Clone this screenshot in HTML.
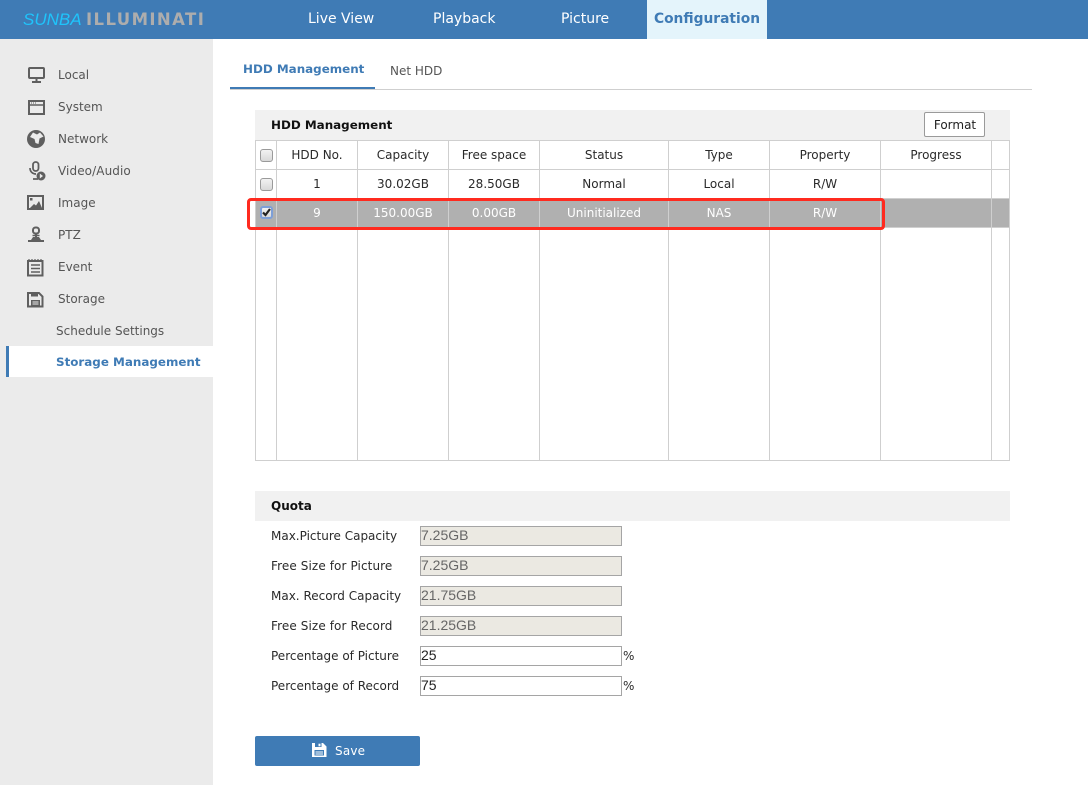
<!DOCTYPE html>
<html><head><meta charset="utf-8"><style>
html,body{margin:0;padding:0;background:#fff}
#p{position:relative;width:1088px;height:785px;overflow:hidden;background:#fff;font:12px "DejaVu Sans",sans-serif;color:#222}
#p div{position:absolute}
.t{white-space:nowrap;line-height:16px;height:16px;color:#2a2a2a}
.c{text-align:center}
.n{color:#fff;font-size:14px;line-height:20px;height:20px;top:9px;white-space:nowrap}
.s{left:58px;color:#555}
.v{background:#cfcfcf;width:1px;top:140px;height:321px}
.h{background:#cfcfcf;left:255px;width:755px;height:1px}
.w{color:#fff}
.i{left:420px;width:202px;height:20px;box-sizing:border-box;border:1px solid #a5a5a5;font:14px/17px "Liberation Sans",sans-serif;padding-left:0}
.r{background:#ebe9e2;color:#666}
.cb{left:260px;width:13px;height:13px;box-sizing:border-box;border:1px solid #9a9a9a;border-radius:3px;background:linear-gradient(#f2f2f2,#d8d8d8)}
svg{position:absolute;overflow:visible}
</style></head><body><div id="p">
<div style="left:0;top:0;width:1088px;height:39px;background:#3f7bb5"></div>
<div style="left:23px;top:10px;height:20px;font:italic 17px/20px 'Liberation Sans',sans-serif;color:#1fc4fb">SUNBA</div>
<div style="left:86px;top:10px;height:20px;font:bold 16.500px/20px 'DejaVu Sans',sans-serif;color:#adadad;letter-spacing:1.400px;white-space:nowrap">ILLUMINATI</div>
<div class="n" style="left:308px">Live View</div>
<div class="n" style="left:433px">Playback</div>
<div class="n" style="left:561px">Picture</div>
<div style="left:647px;top:0;width:120px;height:39px;background:#e4f4fb"></div>
<div class="n c" style="left:647px;width:120px;color:#3f7bb5;font-weight:bold;font-size:13.800px">Configuration</div>

<div style="left:0;top:39px;width:213px;height:746px;background:#ebebeb"></div>
<div class="t s" style="top:67px">Local</div>
<div class="t s" style="top:99px">System</div>
<div class="t s" style="top:131px">Network</div>
<div class="t s" style="top:163px;letter-spacing:.1px">Video/Audio</div>
<div class="t s" style="top:195px">Image</div>
<div class="t s" style="top:227px">PTZ</div>
<div class="t s" style="top:259px">Event</div>
<div class="t s" style="top:291px">Storage</div>
<div class="t" style="left:56px;top:323px;color:#555">Schedule Settings</div>
<div style="left:6px;top:346px;width:207px;height:31px;background:#fff"></div>
<div style="left:6px;top:346px;width:3px;height:31px;background:#3f7bb5"></div>
<div class="t" style="left:56px;top:354px;color:#3f7bb5;font-weight:bold;font-size:11.900px">Storage Management</div>

<svg style="left:0;top:0" width="213" height="320" fill="none" stroke="#5f5f5f" stroke-width="2">
<rect x="29" y="68" width="15" height="10" rx="1"/><path d="M36.500 78v4M32 82h9" />
<rect x="29" y="101" width="15" height="13"/><path d="M29 105h15" stroke-width="1.500"/><path d="M31 103h5" stroke-width="1" stroke-dasharray="1 1"/>
<circle cx="36" cy="139" r="9" fill="#5f5f5f" stroke="none"/><path d="M33 132.500l4 2 3-2 3.500 4-4 2-1 5.500-3-1-1-4-4.500-2z" fill="#ebebeb" stroke="none"/>
<rect x="33" y="162" width="5.500" height="9" rx="2.700" stroke-width="1.800"/><path d="M30 168c0 4 3 6 6 6M33 179h5" stroke-width="1.700"/><circle cx="41" cy="176" r="4.500" fill="#5f5f5f" stroke="none"/><path d="M39.800 173.500l3.200 2.500-3.200 2.500z" fill="#ebebeb" stroke="none"/>
<rect x="28" y="196" width="15" height="13" stroke-width="2"/><path d="M30 208l4-4 2 1.500 3-4.500 3 7z" fill="#5f5f5f" stroke="none"/><rect x="30" y="198" width="2.500" height="2.500" fill="#5f5f5f" stroke="none"/>
<rect x="33" y="227.500" width="6" height="6" rx="2.500" stroke-width="2"/><path d="M32.500 235.500h7" stroke-width="1.500"/><path d="M36 234v3"/><path d="M28 241h16" stroke-width="2"/><path d="M31 240l2-3h6l2 3z" fill="#5f5f5f" stroke="none"/>
<rect x="28" y="261" width="14.500" height="14.500" stroke-width="2"/><path d="M31 265h9M31 268.500h9M31 272h9" stroke-width="1.400"/><path d="M29 259v2M32 259v2M35 259v2M38 259v2M41 259v2" stroke-width="1.200"/>
<path d="M28 293h11l3.500 3.500V306.500H28z" stroke-width="2"/><rect x="31" y="292" width="7" height="4.500" fill="#5f5f5f" stroke="none"/><rect x="31" y="300" width="9" height="6" fill="#5f5f5f" stroke="none"/><path d="M32.500 302h6M32.500 304h6" stroke="#ebebeb" stroke-width="1"/>
</svg>

<div class="t" style="left:243px;top:61px;color:#3f7bb5;font-weight:bold;font-size:11.900px">HDD Management</div>
<div class="t" style="left:390px;top:63px;color:#555">Net HDD</div>
<div style="left:230px;top:89px;width:802px;height:1px;background:#cfcfcf"></div>
<div style="left:230px;top:87px;width:145px;height:2px;background:#3f7bb5"></div>

<div style="left:255px;top:110px;width:755px;height:30px;background:#f1f1f1"></div>
<div class="t" style="left:271px;top:117px;font-weight:bold;color:#111;font-size:11.900px">HDD Management</div>
<div class="c" style="left:924px;top:112px;width:61px;height:25px;box-sizing:border-box;border:1px solid #9a9a9a;border-radius:2px;background:#fff;line-height:24px;padding-left:1px;color:#222">Format</div>

<div style="left:255px;top:198px;width:755px;height:29px;background:#b0b0b0"></div>
<div class="h" style="top:140px"></div><div class="h" style="top:169px"></div><div class="h" style="top:198px"></div><div class="h" style="top:227px"></div><div class="h" style="top:460px"></div>
<div class="v" style="left:255px"></div><div class="v" style="left:276px"></div><div class="v" style="left:357px"></div><div class="v" style="left:448px"></div><div class="v" style="left:539px"></div><div class="v" style="left:668px"></div><div class="v" style="left:769px"></div><div class="v" style="left:880px"></div><div class="v" style="left:991px"></div><div class="v" style="left:1009px"></div>

<div class="cb" style="top:149px"></div>
<div class="cb" style="top:178px"></div>
<div class="cb" style="top:206px;border:2px solid #7d9fd8"></div>
<svg style="left:260px;top:206px" width="13" height="13" fill="none" stroke="#222" stroke-width="2.200"><path d="M3 6.500l2.500 2.500 4.500-6"/></svg>

<div class="t c" style="left:277px;width:80px;top:147px">HDD No.</div>
<div class="t c" style="left:358px;width:90px;top:147px">Capacity</div>
<div class="t c" style="left:449px;width:90px;top:147px">Free space</div>
<div class="t c" style="left:540px;width:128px;top:147px">Status</div>
<div class="t c" style="left:669px;width:100px;top:147px">Type</div>
<div class="t c" style="left:770px;width:110px;top:147px">Property</div>
<div class="t c" style="left:881px;width:110px;top:147px">Progress</div>

<div class="t c" style="left:277px;width:80px;top:176px">1</div>
<div class="t c" style="left:358px;width:90px;top:176px">30.02GB</div>
<div class="t c" style="left:449px;width:90px;top:176px">28.50GB</div>
<div class="t c" style="left:540px;width:128px;top:176px">Normal</div>
<div class="t c" style="left:669px;width:100px;top:176px">Local</div>
<div class="t c" style="left:770px;width:110px;top:176px">R/W</div>

<div class="t c w" style="left:277px;width:80px;top:205px">9</div>
<div class="t c w" style="left:358px;width:90px;top:205px">150.00GB</div>
<div class="t c w" style="left:449px;width:90px;top:205px">0.00GB</div>
<div class="t c w" style="left:540px;width:128px;top:205px">Uninitialized</div>
<div class="t c w" style="left:669px;width:100px;top:205px">NAS</div>
<div class="t c w" style="left:770px;width:110px;top:205px">R/W</div>

<div style="left:247px;top:198px;width:638px;height:32px;box-sizing:border-box;border:3px solid #ff2a1f;border-radius:4px"></div>

<div style="left:255px;top:491px;width:755px;height:30px;background:#f1f1f1"></div>
<div class="t" style="left:271px;top:498px;font-weight:bold;color:#111">Quota</div>
<div class="t" style="left:271px;top:528px">Max.Picture Capacity</div>
<div class="t" style="left:271px;top:558px;letter-spacing:.1px">Free Size for Picture</div>
<div class="t" style="left:271px;top:588px">Max. Record Capacity</div>
<div class="t" style="left:271px;top:618px;letter-spacing:.1px">Free Size for Record</div>
<div class="t" style="left:271px;top:648px">Percentage of Picture</div>
<div class="t" style="left:271px;top:678px">Percentage of Record</div>
<div class="i r" style="top:526px">7.25GB</div>
<div class="i r" style="top:556px">7.25GB</div>
<div class="i r" style="top:586px">21.75GB</div>
<div class="i r" style="top:616px">21.25GB</div>
<div class="i" style="top:646px;color:#222">25</div>
<div class="i" style="top:676px;color:#222">75</div>
<div class="t" style="left:623px;top:648px">%</div>
<div class="t" style="left:623px;top:678px">%</div>

<div style="left:255px;top:736px;width:165px;height:30px;background:#3f7bb5;border-radius:2px"></div>
<svg style="left:312px;top:743px" width="15" height="15"><path d="M0 0h11l3.500 3.500V14H0z" fill="#fff"/><rect x="3" y="0" width="6.500" height="4" fill="#3f7bb5"/><rect x="6.500" y="0.700" width="2" height="2.600" fill="#fff"/><rect x="2.500" y="7" width="9.500" height="5.500" fill="#3f7bb5"/><path d="M3.500 9h7.500M3.500 11h7.500" stroke="#fff" stroke-width="1"/></svg>
<div class="t" style="left:335px;top:743px;color:#fff;letter-spacing:.2px">Save</div>
</div></body></html>
